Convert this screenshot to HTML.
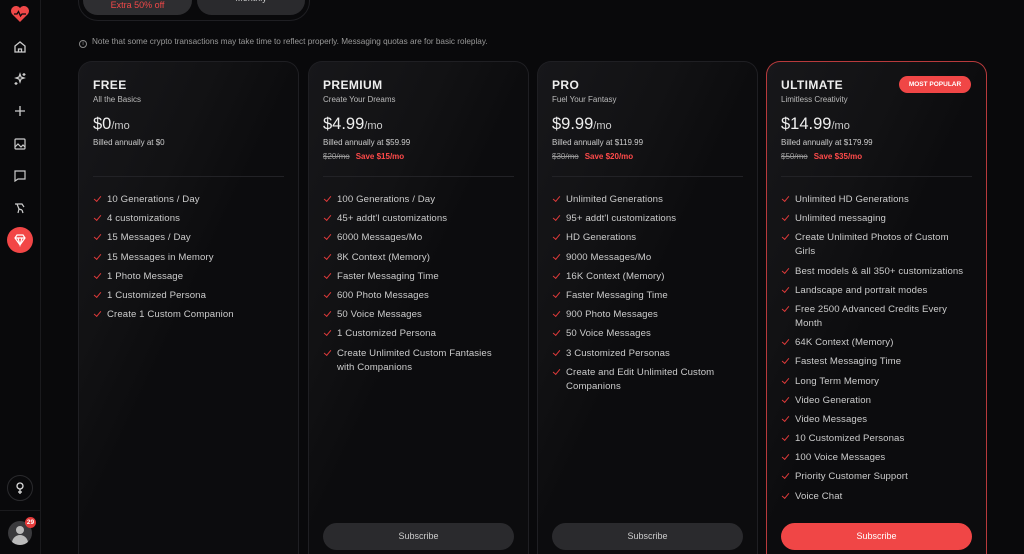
<!DOCTYPE html><html><head><style>
*{margin:0;padding:0;box-sizing:border-box}
html,body{width:1024px;height:554px;overflow:hidden}
body{background:#09090b;font-family:"Liberation Sans",sans-serif;color:#ddd;position:relative}
.sb{position:absolute;left:0;top:0;width:41px;height:554px;border-right:1px solid #1a1a1d;background:#09090b}
.ic{position:absolute;left:12px;width:16px;height:16px}
.card{position:absolute;top:61px;width:221px;height:493px;border:1px solid #1f1f23;border-bottom:none;border-radius:14px 14px 0 0;background:linear-gradient(115deg,#17171a 0%,#121214 30%,#0c0c0e 50%);padding:0 15px}
.t{position:absolute;top:16px;left:14px;font-size:12px;font-weight:bold;color:#eee;letter-spacing:.4px}
.s{position:absolute;top:33px;left:14px;font-size:8px;color:#bbb}
.p{position:absolute;top:53px;left:14px;font-size:16.5px;color:#eee}
.p small{font-size:11px;color:#ccc}
.b{position:absolute;top:76px;left:14px;font-size:8px;color:#ccc}
.x{position:absolute;top:90px;left:14px;font-size:8px;color:#999}
.x s{margin-right:6px}.x b{color:#ff4a4a}
.hr{position:absolute;top:114px;left:14px;right:14px;height:1px;background:#222226}
ul{position:absolute;top:131px;left:14px;right:22px;list-style:none}
li{font-size:9.6px;color:#ccc;position:relative;padding-left:14px;line-height:14px;margin-bottom:5.2px;letter-spacing:.1px}
li:before{content:"";position:absolute;left:1px;top:3px;width:6px;height:3px;border-left:1.3px solid #e03a3a;border-bottom:1.3px solid #e03a3a;transform:rotate(-50deg)}
.btn{position:absolute;top:461px;left:14px;right:14px;height:27px;border-radius:14px;background:#2a2a2d;color:#ccc;font-size:9px;text-align:center;line-height:27px}
</style></head><body>
<div class="sb">
<svg class="ic" style="top:5px;left:10px;width:20px;height:18px" viewBox="0 0 20 18"><path d="M10 17 L2 9 A4.8 4.8 0 0 1 10 3 A4.8 4.8 0 0 1 18 9 Z" fill="#f04848"/><path d="M4 9h3l1.5-2.5 2 4.5 1.5-2h4" stroke="#09090b" stroke-width="1.3" fill="none"/></svg>
<svg class="ic" style="top:39px" viewBox="0 0 16 16"><path d="M3 7l5-4 5 4v6H3z M6.5 13v-3h3v3" stroke="#ccc" stroke-width="1.3" fill="none"/></svg>
<svg class="ic" style="top:71px" viewBox="0 0 16 16"><path d="M8 3l1 3 3 1-3 1-1 3-1-3-3-1 3-1z M12 2v3M10.5 3.5h3M4 11v3M2.5 12.5h3" stroke="#ccc" stroke-width="1.2" fill="none"/></svg>
<svg class="ic" style="top:103px" viewBox="0 0 16 16"><path d="M8 3v10M3 8h10" stroke="#ccc" stroke-width="1.3"/></svg>
<svg class="ic" style="top:136px" viewBox="0 0 16 16"><rect x="3" y="3" width="10" height="10" rx="1" stroke="#ccc" stroke-width="1.2" fill="none"/><path d="M3 11l3-3 3 3 2-2 2 2" stroke="#ccc" stroke-width="1.2" fill="none"/></svg>
<svg class="ic" style="top:168px" viewBox="0 0 16 16"><path d="M3 3h10v8H6l-3 2z" stroke="#ccc" stroke-width="1.2" fill="none"/></svg>
<svg class="ic" style="top:200px" viewBox="0 0 16 16"><path d="M3 4h7l2 3M5 4l2 5 3 1M7 9l-1 4M10 10l1 3" stroke="#ccc" stroke-width="1.2" fill="none"/></svg>
<div style="position:absolute;left:7px;top:227px;width:26px;height:26px;border-radius:50%;background:#f24646"></div>
<svg class="ic" style="top:232px;left:12px" viewBox="0 0 16 16"><path d="M3 6l2-3h6l2 3-5 7z M3 6h10M6 6l2 7 2-7" stroke="#fff" stroke-width="1.2" fill="none"/></svg>
<div style="position:absolute;left:7px;top:475px;width:26px;height:26px;border-radius:50%;border:1px solid #2a2a2d"></div>
<svg class="ic" style="top:480px" viewBox="0 0 16 16"><circle cx="8" cy="6" r="3" stroke="#ddd" stroke-width="1.3" fill="none"/><path d="M8 9v5M6 12h4" stroke="#ddd" stroke-width="1.3"/></svg>
<div style="position:absolute;left:0;top:510px;width:41px;height:1px;background:#1a1a1d"></div>
<div style="position:absolute;left:8px;top:521px;width:24px;height:24px;border-radius:50%;background:#3a3a3d;overflow:hidden"><div style="position:absolute;left:8px;top:5px;width:8px;height:8px;border-radius:50%;background:#bbb"></div><div style="position:absolute;left:4px;top:14px;width:16px;height:12px;border-radius:8px 8px 0 0;background:#bbb"></div></div>
<div style="position:absolute;left:25px;top:517px;width:11px;height:11px;border-radius:50%;background:#e53a3a;color:#fff;font-size:6.5px;font-weight:bold;text-align:center;line-height:11px">29</div>
</div>
<div style="position:absolute;left:78px;top:-20px;width:232px;height:41px;border:1px solid #1f1f23;border-radius:20px"></div>
<div style="position:absolute;left:83px;top:-14px;width:109px;height:29px;border-radius:15px;background:#2e2e31;color:#f04848;font-size:9px;text-align:center;padding-top:14px">Extra 50% off</div>
<div style="position:absolute;left:197px;top:-14px;width:108px;height:29px;border-radius:15px;background:#2a2a2d;color:#ccc;font-size:9px;text-align:center;padding-top:7px">Monthly</div>
<div style="position:absolute;left:79px;top:37px;font-size:8.2px;color:#999"><span style="display:inline-block;width:8px;height:8px;border:1px solid #888;border-radius:50%;font-size:6px;text-align:center;line-height:7px;margin-right:5px;vertical-align:-1px">i</span>Note that some crypto transactions may take time to reflect properly. Messaging quotas are for basic roleplay.</div>

<div class="card" style="left:78px"><div class="t">FREE</div><div class="s">All the Basics</div><div class="p">$0<small>/mo</small></div><div class="b">Billed annually at $0</div><div class="hr"></div>
<ul><li>10 Generations / Day</li><li>4 customizations</li><li>15 Messages / Day</li><li>15 Messages in Memory</li><li>1 Photo Message</li><li>1 Customized Persona</li><li>Create 1 Custom Companion</li></ul></div>

<div class="card" style="left:308px"><div class="t">PREMIUM</div><div class="s">Create Your Dreams</div><div class="p">$4.99<small>/mo</small></div><div class="b">Billed annually at $59.99</div><div class="x"><s>$20/mo</s><b>Save $15/mo</b></div><div class="hr"></div>
<ul><li>100 Generations / Day</li><li>45+ addt'l customizations</li><li>6000 Messages/Mo</li><li>8K Context (Memory)</li><li>Faster Messaging Time</li><li>600 Photo Messages</li><li>50 Voice Messages</li><li>1 Customized Persona</li><li>Create Unlimited Custom Fantasies<br>with Companions</li></ul><div class="btn">Subscribe</div></div>

<div class="card" style="left:537px"><div class="t">PRO</div><div class="s">Fuel Your Fantasy</div><div class="p">$9.99<small>/mo</small></div><div class="b">Billed annually at $119.99</div><div class="x"><s>$30/mo</s><b>Save $20/mo</b></div><div class="hr"></div>
<ul><li>Unlimited Generations</li><li>95+ addt'l customizations</li><li>HD Generations</li><li>9000 Messages/Mo</li><li>16K Context (Memory)</li><li>Faster Messaging Time</li><li>900 Photo Messages</li><li>50 Voice Messages</li><li>3 Customized Personas</li><li>Create and Edit Unlimited Custom<br>Companions</li></ul><div class="btn">Subscribe</div></div>

<div class="card" style="left:766px;border-color:#b83a3c"><div class="t">ULTIMATE</div><div style="position:absolute;top:14px;right:15px;height:17px;width:72px;border-radius:9px;background:#f04646;color:#fff;font-size:6.5px;font-weight:bold;text-align:center;line-height:17px">MOST POPULAR</div><div class="s">Limitless Creativity</div><div class="p">$14.99<small>/mo</small></div><div class="b">Billed annually at $179.99</div><div class="x"><s>$50/mo</s><b>Save $35/mo</b></div><div class="hr"></div>
<ul><li>Unlimited HD Generations</li><li>Unlimited messaging</li><li>Create Unlimited Photos of Custom<br>Girls</li><li>Best models &amp; all 350+ customizations</li><li>Landscape and portrait modes</li><li>Free 2500 Advanced Credits Every<br>Month</li><li>64K Context (Memory)</li><li>Fastest Messaging Time</li><li>Long Term Memory</li><li>Video Generation</li><li>Video Messages</li><li>10 Customized Personas</li><li>100 Voice Messages</li><li>Priority Customer Support</li><li>Voice Chat</li></ul><div class="btn" style="background:#f04646;color:#fff">Subscribe</div></div>
</body></html>
